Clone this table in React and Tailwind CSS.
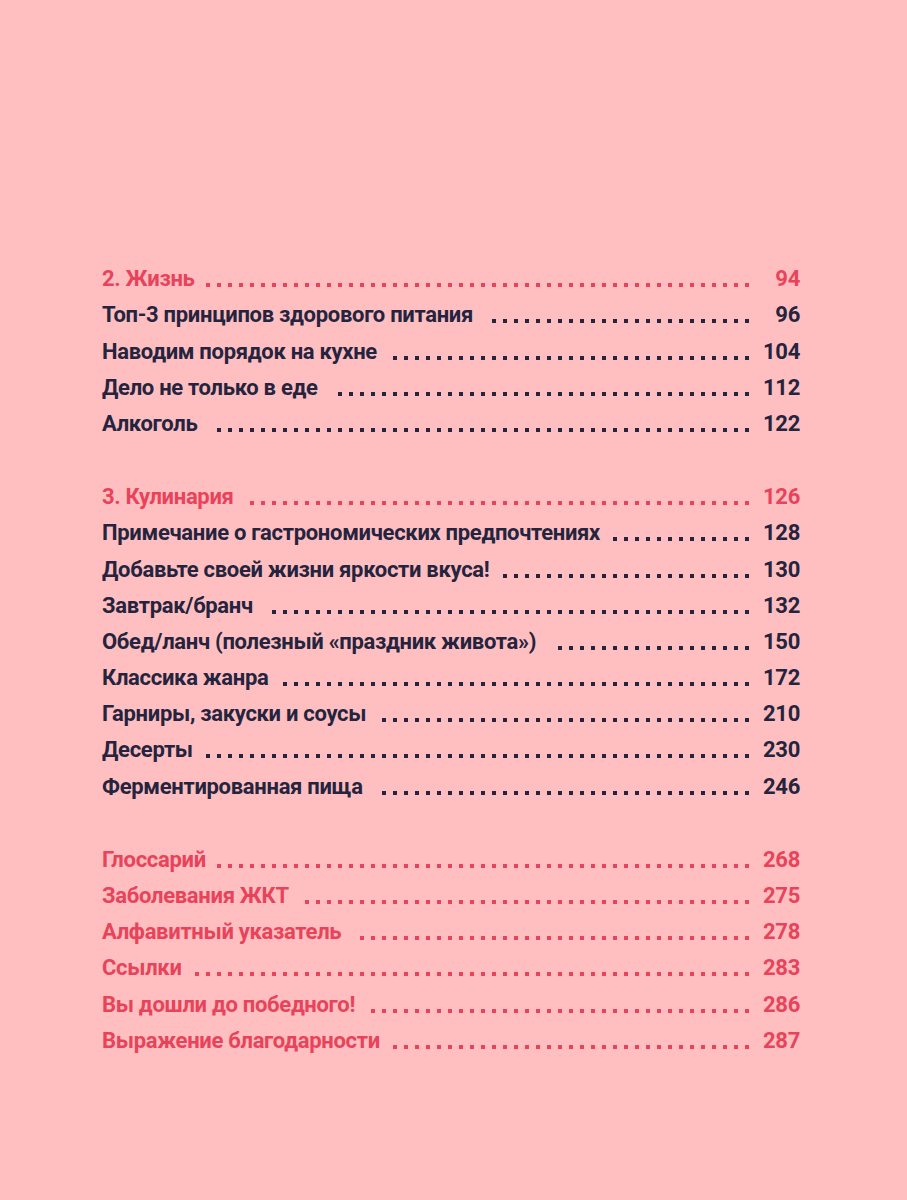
import React from "react";

const sections = [
  {
    items: [
      { title: "2. Жизнь", page: "94", head: true },
      { title: "Топ-3 принципов здорового питания", page: "96" },
      { title: "Наводим порядок на кухне", page: "104" },
      { title: "Дело не только в еде", page: "112" },
      { title: "Алкоголь", page: "122" },
    ],
  },
  {
    items: [
      { title: "3. Кулинария", page: "126", head: true },
      { title: "Примечание о гастрономических предпочтениях", page: "128" },
      { title: "Добавьте своей жизни яркости вкуса!", page: "130" },
      { title: "Завтрак/бранч", page: "132" },
      { title: "Обед/ланч (полезный «праздник живота»)", page: "150" },
      { title: "Классика жанра", page: "172" },
      { title: "Гарниры, закуски и соусы", page: "210" },
      { title: "Десерты", page: "230" },
      { title: "Ферментированная пища", page: "246" },
    ],
  },
  {
    items: [
      { title: "Глоссарий", page: "268", head: true },
      { title: "Заболевания ЖКТ", page: "275", head: true },
      { title: "Алфавитный указатель", page: "278", head: true },
      { title: "Ссылки", page: "283", head: true },
      { title: "Вы дошли до победного!", page: "286", head: true },
      { title: "Выражение благодарности", page: "287", head: true },
    ],
  },
];

const dots = Array.from({ length: 64 });

// whole dots only: wrap pushes the ones that don't fit onto a hidden second line
const Leader = ({ head }) => (
  <span className="flex-1 ml-1 mb-[10px] h-[4px] overflow-hidden flex flex-wrap justify-end">
    {dots.map((_, i) => (
      <span key={i} className="w-[11px] h-[4px] flex justify-end">
        <span className={"w-[4px] h-[4px] " + (head ? "bg-[#e8435a]" : "bg-[#25243f]")} />
      </span>
    ))}
  </span>
);

const Row = ({ title, page, head }) => (
  <div
    className={
      "flex items-end h-[36.2px] leading-[36px] " +
      (head ? "text-[#e8435a]" : "text-[#25243f]")
    }
  >
    <span className="whitespace-nowrap">{title}</span>
    <Leader head={head} />
    <span className="w-[51px] text-right">{page}</span>
  </div>
);

export default function App() {
  return (
    <div className="w-[907px] h-[1200px] bg-[#ffbfc0] pt-[261px] pl-[102px] pr-[107px] font-['Roboto',sans-serif] font-bold text-[22px] tracking-[-0.3px]">
      <div className="flex flex-col gap-[37px]">
        {sections.map((s, i) => (
          <div key={i}>
            {s.items.map((it) => (
              <Row key={it.title} {...it} />
            ))}
          </div>
        ))}
      </div>
    </div>
  );
}
